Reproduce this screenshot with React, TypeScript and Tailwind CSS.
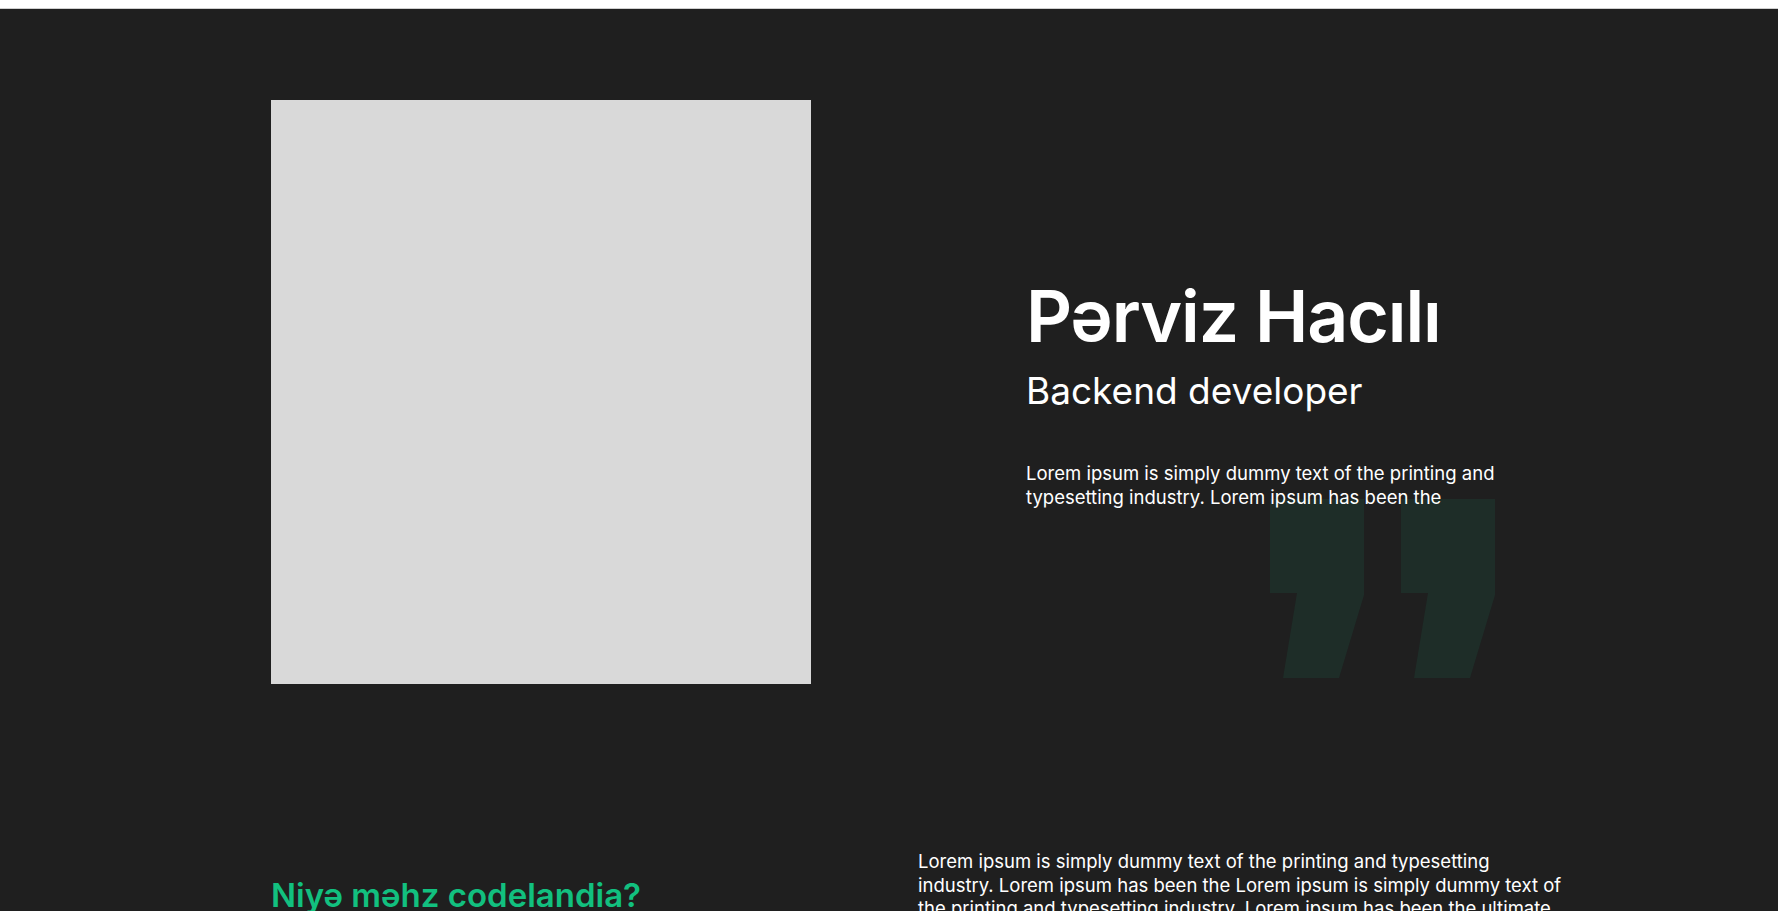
export default function App() {
  return (
    <div className="min-h-screen bg-[#1f1f1f] font-['Inter',sans-serif] text-white">
      {/* top strip */}
      <div className="h-[8px] bg-white" />
      <div className="h-px bg-[#cfcfcf]" />

      {/* Hero / profile */}
      <section className="mx-auto w-[1236px] pt-[91px]">
        <div className="flex items-center">
          <div className="h-[584px] w-[540px] shrink-0 bg-[#d9d9d9]" />

          <div className="relative ml-[215px] mt-[2px] w-[481px]">
            <h1 className="text-[71.5px] font-semibold leading-[1.1] tracking-[-0.015em]">
              Pərviz Hacılı
            </h1>
            <h2 className="mt-[11px] text-[37px] font-normal leading-[1.3]">
              Backend developer
            </h2>
            <div className="relative mt-[46px]">
              <svg
                className="absolute left-[244px] top-[38px]"
                width="226"
                height="180"
                viewBox="0 0 226 180"
              >
                <polygon points="0,0 94,0 94,96 69,179 13,179 27,94 0,94" fill="#1e2d28" />
                <polygon points="131,0 225,0 225,96 200,179 144,179 158,94 131,94" fill="#1e2d28" />
              </svg>
              <p className="relative text-[18.5px] leading-[24px]">
                Lorem ipsum is simply dummy text of the printing and
                <br />
                typesetting industry. Lorem ipsum has been the
              </p>
            </div>
          </div>
        </div>
      </section>

      {/* Why codelandia */}
      <section className="mx-auto mt-[166px] flex w-[1236px] items-start pb-[40px]">
        <h3 className="mt-[26px] w-[647px] shrink-0 text-[33px] font-semibold leading-[1.2] text-[#12c07f]">
          Niyə məhz codelandia?
        </h3>
        <p className="w-[650px] shrink-0 text-[18.5px] leading-[23.5px]">
          Lorem ipsum is simply dummy text of the printing and typesetting industry. Lorem ipsum has been the
          Lorem ipsum is simply dummy text of the printing and typesetting industry. Lorem ipsum has been the
          ultimate tool for designers and developers who need placeholder text for their layouts.
        </p>
      </section>
    </div>
  )
}
